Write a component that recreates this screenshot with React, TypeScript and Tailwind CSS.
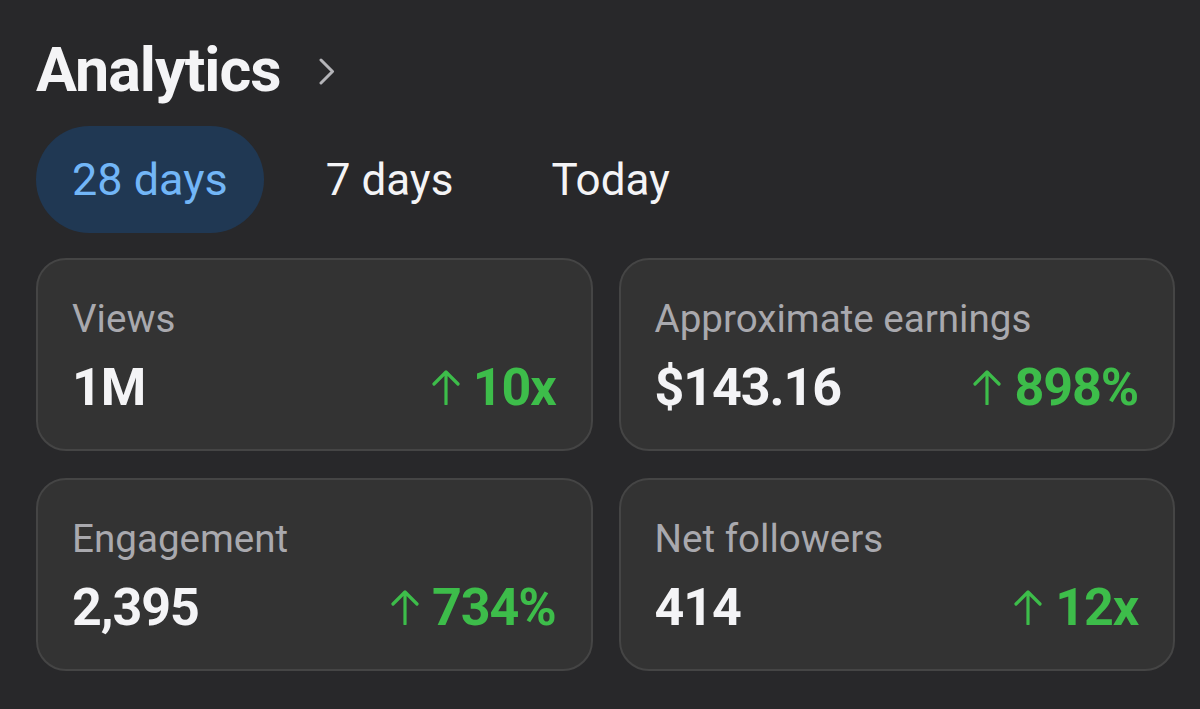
import React from 'react';

const FONT = { fontFamily: 'Roboto, "Noto Sans", "Liberation Sans", sans-serif' };

const STATS = [
  { label: 'Views', value: '1M', change: '10x' },
  { label: 'Approximate earnings', value: '$143.16', change: '898%' },
  { label: 'Engagement', value: '2,395', change: '734%' },
  { label: 'Net followers', value: '414', change: '12x' },
];

const TABS = ['28 days', '7 days', 'Today'];

function ArrowUp() {
  return (
    <svg width="30" height="36" viewBox="0 0 30 36" fill="none" className="mb-[1px]">
      <path d="M15 35V3M3 15L15 3L27 15" stroke="#3dbd4a" strokeWidth="3.2" strokeLinecap="round" strokeLinejoin="round" />
    </svg>
  );
}

function StatCard({ label, value, change }: { label: string; value: string; change: string }) {
  return (
    <div className="h-[193px] rounded-[30px] border-2 border-[#454545] bg-[#333333] pl-[34px] pr-[35px] pt-[35px]">
      <p className="text-[38.6px] leading-[48px] text-[#a9a9ae]">{label}</p>
      <div className="mt-[15px] flex items-end justify-between">
        <span className="text-[52px] font-bold leading-[60px] tracking-[-1.1px] text-[#f4f4f6]">{value}</span>
        <span className="flex items-end gap-[12px] pb-[12px]">
          <ArrowUp />
          <span className="text-[52px] font-bold leading-[36px] tracking-[-1.1px] text-[#3dbd4a]">{change}</span>
        </span>
      </div>
    </div>
  );
}

export default function App() {
  return (
    <div className="h-[709px] w-[1200px] overflow-hidden bg-[#28282a] pl-[36px]" style={FONT}>
      {/* Header */}
      <div className="flex items-center pt-[34px]">
        <h1 className="text-[61px] font-bold leading-[72px] tracking-[-1px] text-[#f4f4f6]">Analytics</h1>
        <svg width="16" height="27" viewBox="0 0 16 27" fill="none" className="ml-[38px] mt-[2px]">
          <path d="M2 2L13.5 13.5L2 25" stroke="#b4b4b8" strokeWidth="3" strokeLinecap="round" strokeLinejoin="round" />
        </svg>
      </div>

      {/* Range tabs */}
      <div className="mt-[20px] flex gap-[26px]">
        {TABS.map((t, i) => (
          <button
            key={t}
            className={`flex h-[107px] items-center rounded-full px-[36px] leading-none ${
              i === 0 ? 'bg-[#203853] text-[45px] text-[#72b6f7]' : 'text-[44px] text-[#f4f4f6]'
            }`}
          >
            {t}
          </button>
        ))}
      </div>

      {/* Stat cards */}
      <div className="mt-[25px] grid w-[1139px] grid-cols-2 gap-x-[26px] gap-y-[27px]">
        {STATS.map((s) => (
          <StatCard key={s.label} {...s} />
        ))}
      </div>
    </div>
  );
}
